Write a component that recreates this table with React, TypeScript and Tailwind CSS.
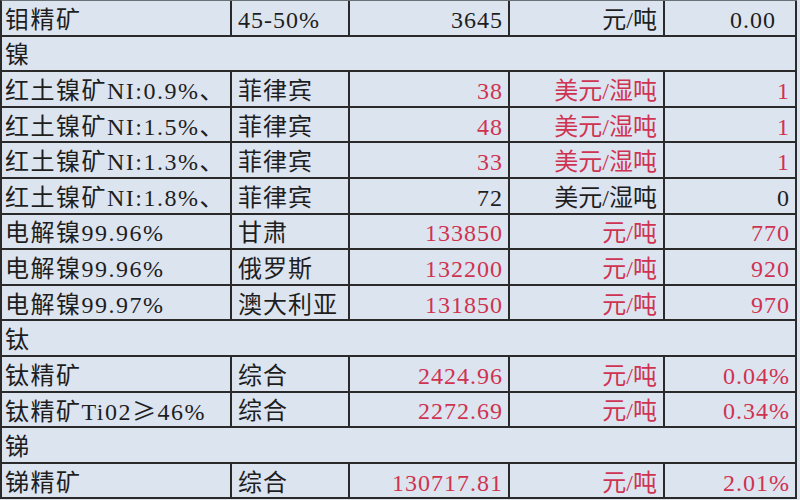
type Item = {
  kind: "item";
  name: React.ReactNode;
  origin: string;
  price: string;
  unit: string;
  change: string;
  red?: boolean;
};
type Section = { kind: "section"; name: string };
type Row = Item | Section;

const rows: Row[] = [
  { kind: "item", name: "钼精矿", origin: "45-50%", price: "3645", unit: "元/吨", change: "0.00  " },
  { kind: "section", name: "镍" },
  { kind: "item", name: "红土镍矿NI:0.9%、", origin: "菲律宾", price: "38", unit: "美元/湿吨", change: "1", red: true },
  { kind: "item", name: "红土镍矿NI:1.5%、", origin: "菲律宾", price: "48", unit: "美元/湿吨", change: "1", red: true },
  { kind: "item", name: "红土镍矿NI:1.3%、", origin: "菲律宾", price: "33", unit: "美元/湿吨", change: "1", red: true },
  { kind: "item", name: "红土镍矿NI:1.8%、", origin: "菲律宾", price: "72", unit: "美元/湿吨", change: "0" },
  { kind: "item", name: "电解镍99.96%", origin: "甘肃", price: "133850", unit: "元/吨", change: "770", red: true },
  { kind: "item", name: "电解镍99.96%", origin: "俄罗斯", price: "132200", unit: "元/吨", change: "920", red: true },
  { kind: "item", name: "电解镍99.97%", origin: "澳大利亚", price: "131850", unit: "元/吨", change: "970", red: true },
  { kind: "section", name: "钛" },
  { kind: "item", name: "钛精矿", origin: "综合", price: "2424.96", unit: "元/吨", change: "0.04%", red: true },
  {
    kind: "item",
    name: (
      <>
        钛精矿Ti02<span className="font-['Noto_Sans_CJK_SC'] leading-none">≥</span>46%
      </>
    ),
    origin: "综合",
    price: "2272.69",
    unit: "元/吨",
    change: "0.34%",
    red: true,
  },
  { kind: "section", name: "锑" },
  { kind: "item", name: "锑精矿", origin: "综合", price: "130717.81", unit: "元/吨", change: "2.01%", red: true },
];

export default function App() {
  return (
    <div className="h-[500px] w-[800px] overflow-hidden bg-[#dce4f0] font-['Liberation_Serif','Noto_Sans_CJK_SC',serif] text-[24px] leading-none text-[#1e1e1e]">
      <div className="w-[797px] border-t border-l-2 border-t-[#6b6f76] border-l-[#2a2a2a]">
        {rows.map((row, i) =>
          row.kind === "section" ? (
            <div
              key={i}
              className="flex h-[35.6px] items-center border-r-2 border-b-2 border-[#2a2a2a] pt-1 pl-[3px]"
            >
              {row.name}
            </div>
          ) : (
            <div
              key={i}
              className="grid h-[35.6px] grid-cols-[230px_118px_160px_155px_132px] border-b-2 border-[#2a2a2a]"
            >
              <div className="flex items-center border-r-2 border-[#2a2a2a] pt-1 pl-[3px] tracking-[1.5px] whitespace-nowrap">
                <span>{row.name}</span>
              </div>
              <div className="flex items-center border-r-2 border-[#2a2a2a] pt-1 pl-[6px] tracking-[1px] whitespace-nowrap">
                {row.origin}
              </div>
              <div
                className={`flex items-center justify-end border-r-2 border-[#2a2a2a] pt-1 pr-[5px] tracking-[1px] whitespace-pre ${
                  row.red ? "text-[#cf3350]" : ""
                }`}
              >
                {row.price}
              </div>
              <div
                className={`flex items-center justify-end border-r-2 border-[#2a2a2a] pt-1 pr-[6px] whitespace-nowrap ${
                  row.red ? "text-[#cf3350]" : ""
                }`}
              >
                {row.unit}
              </div>
              <div
                className={`flex items-center justify-end border-r-2 border-[#2a2a2a] pt-1 pr-[5px] tracking-[1px] whitespace-pre ${
                  row.red ? "text-[#cf3350]" : ""
                }`}
              >
                {row.change}
              </div>
            </div>
          )
        )}
      </div>
    </div>
  );
}
